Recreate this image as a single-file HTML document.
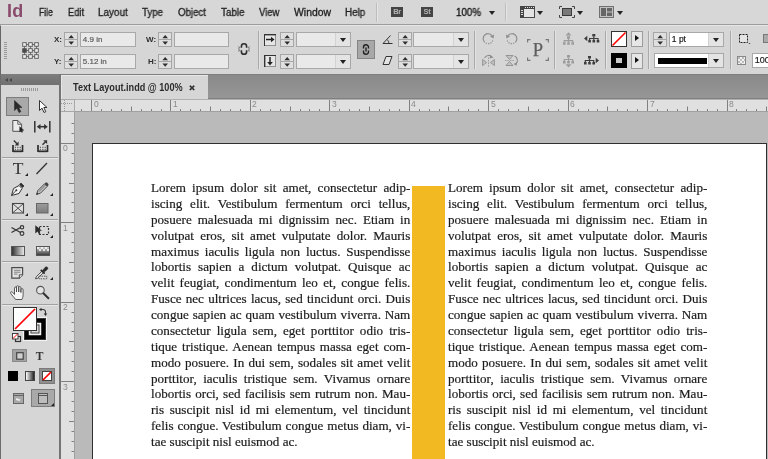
<!DOCTYPE html><html><head><meta charset="utf-8"><title>Text Layout.indd @ 100%</title><style>
*{margin:0;padding:0;box-sizing:border-box}
html,body{width:768px;height:459px;overflow:hidden;background:#d6d6d6;font-family:"Liberation Sans",sans-serif;}
.a{position:absolute}
#menubar{left:0;top:0;width:768px;height:25px;background:#d7d7d7;border-bottom:1px solid #9c9c9c}
.mi{position:absolute;top:5px;font-size:10px;line-height:15px;color:#222;-webkit-text-stroke-width:.3px;white-space:nowrap;transform-origin:0 50%}
#ctrl{left:0;top:25px;width:768px;height:49px;background:#d6d6d6;border-top:1px solid #e6e6e6;border-left:1px solid #666}
.fld{position:absolute;height:15px;background:#e9e9e9;border:1px solid #a8a8a8;font-size:8px;line-height:13.5px;color:#5c5c5c;-webkit-text-stroke-width:.2px;padding-left:1.800px;white-space:nowrap;overflow:hidden}
.sp{position:absolute;width:14px;height:15px;background:#dedede;border:1px solid #a8a8a8}
.sp:before{content:"";position:absolute;left:0;right:0;top:6.5px;height:1px;background:#a8a8a8}
.sp i{position:absolute;left:3.4px;width:0;height:0;border-left:2.8px solid transparent;border-right:2.8px solid transparent}
.sp i.u{top:2.3px;border-bottom:3.3px solid #333}
.sp i.d{top:8.8px;border-top:3.3px solid #333}
.lbl{position:absolute;font-size:8px;font-weight:bold;color:#2e2e2e;line-height:10px}
.vsep{position:absolute;width:1px;top:31px;height:38px;background:#a9a9a9;box-shadow:1px 0 0 #e4e4e4}
.dd{position:absolute;right:0;top:0;bottom:0;width:15px;border-left:1px solid #d2d2d2;background:#e4e4e4}
.dd:after{content:"";position:absolute;left:4px;top:4.5px;border-left:3px solid transparent;border-right:3px solid transparent;border-top:4px solid #222}
#tabbar{left:61px;top:74px;width:707px;height:25px;background:linear-gradient(#8a8a8a,#969696);border-top:1px solid #7e7e7e;border-bottom:1px solid #808080}
#tab{left:61px;top:75px;width:147px;height:24px;background:#d6d6d6;border-top:1px solid #e8e8e8;border-left:1px solid #e6e6e6;font-size:10px;font-weight:bold;color:#2b2b2b;line-height:24px;padding-left:11px;white-space:nowrap}
#hr{left:61px;top:99px;width:707px;height:13px;background:#e0e0e0;border-top:1px solid #b0b0b0;border-bottom:1px solid #a0a0a0;overflow:hidden}
#vr{left:61px;top:112px;width:14px;height:347px;background:#e0e0e0;border-right:1px solid #a0a0a0;overflow:hidden}
#org{left:61px;top:99px;width:14px;height:13px;background:#dedede;border:1px solid #a8a8a8;border-left:none}
.rn{position:absolute;font-size:8.5px;color:#8a8a8a;line-height:9px}
#paste{left:75px;top:112px;width:693px;height:347px;background:#bababa}
#page{left:92px;top:143px;width:675px;height:330px;background:#fff;border:1px solid #2f2f2f}
.col{position:absolute;width:259.3px;font-family:"Liberation Serif",serif;font-size:13.1px;line-height:15.875px;color:#1c1c1c;-webkit-text-stroke:.2px #1c1c1c;text-align:justify}
.col div{text-align:justify;text-align-last:justify;white-space:nowrap;height:15.875px}
.col div.last{text-align-last:left}
#bar{left:412px;top:186px;width:33px;height:280px;background:#f3b923}
#tools{left:0;top:74px;width:61px;height:385px;background:#d6d6d6;border-left:1px solid #6d6d6d;}
#thead{left:1px;top:74px;width:58px;height:11px;background:linear-gradient(#7e7e7e,#707070)}
#tedge{left:59px;top:74px;width:2px;height:385px;background:#747474}
.tsep{position:absolute;left:2px;width:56px;height:1px;background:#a2a2a2;box-shadow:0 1px 0 #e6e6e6}
.sel{position:absolute;background:#a9a9a9;border:1px solid #7c7c7c}
svg{position:absolute;overflow:visible}
.col,.mi,#tab,.fld,.lbl,.rn,.gt{will-change:transform}
</style></head><body>
<div id="menubar" class="a">
<div class="a gt" style="left:6.800px;top:1.300px;font-size:18px;line-height:20px;font-weight:bold;color:#8a4a6c;letter-spacing:0.300px;transform:scaleX(1);transform-origin:left">Id</div>
<div class="mi" style="left:39.3px;transform:scaleX(0.86)">File</div>
<div class="mi" style="left:68px;transform:scaleX(0.93)">Edit</div>
<div class="mi" style="left:98.3px;transform:scaleX(0.99)">Layout</div>
<div class="mi" style="left:142px;transform:scaleX(0.97)">Type</div>
<div class="mi" style="left:178px;transform:scaleX(0.97)">Object</div>
<div class="mi" style="left:221px;transform:scaleX(0.985)">Table</div>
<div class="mi" style="left:258.5px;transform:scaleX(0.945)">View</div>
<div class="mi" style="left:294px;transform:scaleX(1.04)">Window</div>
<div class="mi" style="left:344.5px;transform:scaleX(0.98)">Help</div>
<div class="a" style="left:376px;top:3px;width:1px;height:19px;background:#bdbdbd;box-shadow:1px 0 0 #e6e6e6"></div>
<div class="a gt" style="left:391px;top:7px;width:12px;height:10px;background:#454545;color:#b4b4b4;font-size:7.5px;font-weight:bold;line-height:10px;text-align:center;letter-spacing:-0.3px">Br</div>
<div class="a gt" style="left:421px;top:7px;width:12px;height:10px;background:#454545;color:#b4b4b4;font-size:7.5px;font-weight:bold;line-height:10px;text-align:center;letter-spacing:-0.3px">St</div>
<div class="mi" style="left:456px;color:#111;transform:scaleX(.977)">100%</div>
<div class="a" style="left:489px;top:11px;border-left:3px solid transparent;border-right:3px solid transparent;border-top:4px solid #222"></div>
<div class="a" style="left:505px;top:3px;width:1px;height:18px;background:#bdbdbd;box-shadow:1px 0 0 #e6e6e6"></div>
<svg style="left:520px;top:6px" width="15" height="12" viewBox="0 0 15 12"><rect x="0.5" y="0.5" width="14" height="11" fill="#e4e4e4" stroke="#4a4a4a"/><rect x="0" y="0" width="15" height="3" fill="#444"/><rect x="0" y="0" width="4" height="12" fill="#444"/><g fill="#ddd"><rect x="5" y="1" width="1" height="1"/><rect x="7" y="1" width="1" height="1"/><rect x="9" y="1" width="1" height="1"/><rect x="11" y="1" width="1" height="1"/><rect x="13" y="1" width="1" height="1"/><rect x="1" y="4" width="2" height="1"/><rect x="1" y="6" width="2" height="1"/><rect x="1" y="8" width="2" height="1"/></g></svg>
<div class="a" style="left:537px;top:11px;border-left:3px solid transparent;border-right:3px solid transparent;border-top:4px solid #222"></div>
<svg style="left:559px;top:6px" width="16" height="12" viewBox="0 0 16 12"><path d="M0.5 3V0.5H3M13 0.5h2.5V3M15.5 9v2.5H13M3 11.5H0.5V9" fill="none" stroke="#444"/><rect x="3.500" y="2.500" width="9" height="7" fill="#7a7a7a" stroke="#3a3a3a"/></svg>
<div class="a" style="left:577px;top:11px;border-left:3px solid transparent;border-right:3px solid transparent;border-top:4px solid #222"></div>
<svg style="left:599px;top:6px" width="15" height="12" viewBox="0 0 15 12"><rect x="0.500" y="0.500" width="14" height="11" fill="#c2c2c2" stroke="#707070"/><rect x="2" y="2" width="5" height="8" fill="#666"/><rect x="8" y="2" width="5" height="3.500" fill="#666"/><rect x="8" y="6.500" width="5" height="3.500" fill="#666"/></svg>
<div class="a" style="left:617px;top:11px;border-left:3px solid transparent;border-right:3px solid transparent;border-top:4px solid #222"></div>
</div>
<div id="ctrl" class="a"></div>
<div class="a" style="left:4px;top:42px;width:3px;height:17px;background:repeating-linear-gradient(#999 0 1px,transparent 1px 2px)"></div>
<svg style="left:22px;top:42px" width="17" height="17" viewBox="0 0 17 17"><path d="M2.500 2.500H14.500V14.500H2.500zM2.500 8.500H14.500M8.500 2.500V14.500" fill="none" stroke="#666" stroke-width=".9"/><rect x="0.7" y="0.7" width="3.600" height="3.600" fill="#f0f0f0" stroke="#555" stroke-width=".9"/><rect x="6.7" y="0.7" width="3.600" height="3.600" fill="#f0f0f0" stroke="#555" stroke-width=".9"/><rect x="12.7" y="0.7" width="3.600" height="3.600" fill="#f0f0f0" stroke="#555" stroke-width=".9"/><rect x="0.7" y="6.7" width="3.600" height="3.600" fill="#4a4a4a" stroke="#555" stroke-width=".9"/><rect x="6.7" y="6.7" width="3.600" height="3.600" fill="#f0f0f0" stroke="#555" stroke-width=".9"/><rect x="12.7" y="6.7" width="3.600" height="3.600" fill="#f0f0f0" stroke="#555" stroke-width=".9"/><rect x="0.7" y="12.7" width="3.600" height="3.600" fill="#f0f0f0" stroke="#555" stroke-width=".9"/><rect x="6.7" y="12.7" width="3.600" height="3.600" fill="#f0f0f0" stroke="#555" stroke-width=".9"/><rect x="12.7" y="12.7" width="3.600" height="3.600" fill="#f0f0f0" stroke="#555" stroke-width=".9"/></svg>
<div class="lbl" style="left:53.5px;top:35px">X:</div>
<div class="lbl" style="left:54px;top:56.5px">Y:</div>
<svg style="left:64px;top:31.5px" width="14" height="15" viewBox="0 0 14 15"><rect x="0.500" y="0.500" width="13" height="14" fill="#dfdfdf" stroke="#a6a6a6"/><path d="M1 7.500h12" stroke="#a6a6a6"/><path d="M4.400 6.200h5.600l-2.800-3.300zM4.400 9.400h5.600l-2.800 3.300z" fill="#2e2e2e"/></svg>
<svg style="left:64px;top:53.5px" width="14" height="15" viewBox="0 0 14 15"><rect x="0.500" y="0.500" width="13" height="14" fill="#dfdfdf" stroke="#a6a6a6"/><path d="M1 7.500h12" stroke="#a6a6a6"/><path d="M4.400 6.200h5.600l-2.800-3.300zM4.400 9.400h5.600l-2.800 3.300z" fill="#2e2e2e"/></svg>
<div class="fld" style="left:80px;top:31.5px;width:56px;">4.9 in</div>
<div class="fld" style="left:80px;top:53.5px;width:56px;">5.12 in</div>
<div class="lbl" style="left:146px;top:35px">W:</div>
<div class="lbl" style="left:148px;top:56.5px">H:</div>
<svg style="left:158px;top:31.5px" width="14" height="15" viewBox="0 0 14 15"><rect x="0.500" y="0.500" width="13" height="14" fill="#dfdfdf" stroke="#a6a6a6"/><path d="M1 7.500h12" stroke="#a6a6a6"/><path d="M4.400 6.200h5.600l-2.800-3.300zM4.400 9.400h5.600l-2.800 3.300z" fill="#2e2e2e"/></svg>
<svg style="left:158px;top:53.5px" width="14" height="15" viewBox="0 0 14 15"><rect x="0.500" y="0.500" width="13" height="14" fill="#dfdfdf" stroke="#a6a6a6"/><path d="M1 7.500h12" stroke="#a6a6a6"/><path d="M4.400 6.200h5.600l-2.800-3.300zM4.400 9.400h5.600l-2.800 3.300z" fill="#2e2e2e"/></svg>
<div class="fld" style="left:174px;top:31.5px;width:55px;"></div>
<div class="fld" style="left:174px;top:53.5px;width:55px;"></div>
<svg style="left:238px;top:42.500px" width="12" height="12" viewBox="0 0 12 12"><path d="M3.400 4.800V3.300a2.600 2.600 0 0 1 5.200 0V4.800M3.400 7.200v1.500a2.600 2.600 0 0 0 5.200 0V7.200" fill="none" stroke="#2e2e2e" stroke-width="1.600"/><path d="M0.200 3.800l1.900.8M0 6h1.900M0.200 8.200l1.900-.8M11.800 3.800l-1.900.8M12 6h-1.900M11.800 8.200l-1.900-.8" stroke="#555" stroke-width=".8"/></svg>
<div class="vsep" style="left:258px"></div>
<svg style="left:264px;top:34px" width="12" height="12" viewBox="0 0 12 12"><rect x="0.500" y="0.500" width="11" height="11" fill="#e6e6e6" stroke="#444" stroke-dasharray="1 1"/><path d="M0.500 0v12" stroke="#333" stroke-width="1"/><path d="M0 0.700h12" stroke="#333" stroke-width="1.400"/><path d="M2 5.500h6" stroke="#222" stroke-width="1.500"/><path d="M7 2.800l3.500 2.700-3.500 2.700z" fill="#222"/></svg>
<svg style="left:264px;top:55px" width="12" height="12" viewBox="0 0 12 12"><rect x="0.500" y="0.500" width="11" height="11" fill="#e6e6e6" stroke="#444" stroke-dasharray="1 1"/><path d="M0.700 0v12" stroke="#333" stroke-width="1.400"/><path d="M0 0.500h12" stroke="#333" stroke-width="1"/><path d="M6 2v6" stroke="#222" stroke-width="1.500"/><path d="M3.200 7l2.800 3.500 2.800-3.500z" fill="#222"/></svg>
<svg style="left:280px;top:31.5px" width="14" height="15" viewBox="0 0 14 15"><rect x="0.500" y="0.500" width="13" height="14" fill="#dfdfdf" stroke="#a6a6a6"/><path d="M1 7.500h12" stroke="#a6a6a6"/><path d="M4.400 6.200h5.600l-2.800-3.300zM4.400 9.400h5.600l-2.800 3.300z" fill="#2e2e2e"/></svg>
<svg style="left:280px;top:53.5px" width="14" height="15" viewBox="0 0 14 15"><rect x="0.500" y="0.500" width="13" height="14" fill="#dfdfdf" stroke="#a6a6a6"/><path d="M1 7.500h12" stroke="#a6a6a6"/><path d="M4.400 6.200h5.600l-2.800-3.300zM4.400 9.400h5.600l-2.800 3.300z" fill="#2e2e2e"/></svg>
<div class="fld" style="left:296px;top:31.5px;width:55px;"><span class="dd"></span></div>
<div class="fld" style="left:296px;top:53.5px;width:55px;"><span class="dd"></span></div>
<div class="sel" style="left:357px;top:40px;width:18px;height:19px;background:#a8a8a8;border-color:#858585"></div>
<svg style="left:362px;top:44px" width="8" height="11" viewBox="0 0 8 11"><path d="M1.5 4.5V3.2a2.5 2.5 0 0 1 5 0V4.5M1.5 6.5v1.3a2.5 2.5 0 0 0 5 0V6.5M4 3.5v4" fill="none" stroke="#222" stroke-width="1.4"/></svg>
<svg style="left:382px;top:35px" width="11" height="9" viewBox="0 0 11 9"><path d="M8.5 0.5L1 8.5H10.5" fill="none" stroke="#333" stroke-width="1"/><path d="M5 4.5a4 4 0 0 1 1.8 4" fill="none" stroke="#333" stroke-width=".9"/></svg>
<svg style="left:382px;top:56px" width="11" height="9" viewBox="0 0 11 9"><path d="M4 0.5H10L7 8.5H1z" fill="#e4e4e4" stroke="#333" stroke-width="1"/></svg>
<svg style="left:397.5px;top:31.5px" width="14" height="15" viewBox="0 0 14 15"><rect x="0.500" y="0.500" width="13" height="14" fill="#dfdfdf" stroke="#a6a6a6"/><path d="M1 7.500h12" stroke="#a6a6a6"/><path d="M4.400 6.200h5.600l-2.800-3.300zM4.400 9.400h5.600l-2.800 3.300z" fill="#2e2e2e"/></svg>
<svg style="left:397.5px;top:53.5px" width="14" height="15" viewBox="0 0 14 15"><rect x="0.500" y="0.500" width="13" height="14" fill="#dfdfdf" stroke="#a6a6a6"/><path d="M1 7.500h12" stroke="#a6a6a6"/><path d="M4.400 6.200h5.600l-2.800-3.300zM4.400 9.400h5.600l-2.800 3.300z" fill="#2e2e2e"/></svg>
<div class="fld" style="left:413px;top:31.5px;width:56px;"><span class="dd"></span></div>
<div class="fld" style="left:413px;top:53.5px;width:56px;"><span class="dd"></span></div>
<div class="vsep" style="left:474px"></div>
<svg style="left:482px;top:32px" width="13" height="13" viewBox="0 0 13 13"><path d="M2.45 9.95A4.9 4.9 0 1 1 9.84 3.52" fill="none" stroke="#8e8e8e" stroke-width="1.200"/><path d="M10.80 8.48A4.9 4.9 0 0 1 2.45 9.95" fill="none" stroke="#8e8e8e" stroke-width="1.200" stroke-dasharray="1.200 1.200"/><path d="M11.50 6.58L12.15 2.52L7.98 4.47z" fill="#8e8e8e"/></svg>
<svg style="left:505px;top:32px" width="13" height="13" viewBox="0 0 13 13"><g transform="translate(13,0) scale(-1,1)"><path d="M2.45 9.95A4.9 4.9 0 1 1 9.84 3.52" fill="none" stroke="#8e8e8e" stroke-width="1.200"/><path d="M10.80 8.48A4.9 4.9 0 0 1 2.45 9.95" fill="none" stroke="#8e8e8e" stroke-width="1.200" stroke-dasharray="1.200 1.200"/><path d="M11.50 6.58L12.15 2.52L7.98 4.47z" fill="#8e8e8e"/></g></svg>
<svg style="left:482px;top:54px" width="13" height="13" viewBox="0 0 13 13"><path d="M0.600 5.500v6l4-3zM12.400 5.500v6l-4-3z" fill="#c4c4c4" stroke="#8e8e8e" stroke-width=".9"/><path d="M6.500 3.500v9.500" stroke="#8e8e8e" stroke-width=".8" stroke-dasharray="1.500 1"/><path d="M2.500 4a4.500 4.500 0 0 1 7.500-1" fill="none" stroke="#8e8e8e" stroke-width="1.100"/><path d="M8.200 1l3.300 2.600-3.800.9z" fill="#8e8e8e"/></svg>
<svg style="left:505px;top:54px" width="14" height="13" viewBox="0 0 14 13"><path d="M1 1.500h7l-3.500 4zM1 11.500h7l-3.500-4z" fill="#c4c4c4" stroke="#8e8e8e" stroke-width=".9"/><path d="M0 6.500h9.500" stroke="#8e8e8e" stroke-width=".8" stroke-dasharray="1.500 1"/><path d="M9.500 2a5 5 0 0 1 1.500 8" fill="none" stroke="#8e8e8e" stroke-width="1.100"/><path d="M12.300 8l-.8 3.800-3-1.800z" fill="#8e8e8e"/></svg>
<svg class="gt" style="left:527px;top:39px" width="22" height="22" viewBox="0 0 22 22"><path d="M0.600 3.500V0.600H3.500M18.500 0.600H21.400V3.500M21.400 18.500V21.400H18.500M3.500 21.400H0.600V18.500" fill="none" stroke="#7a7a7a" stroke-width="1.200"/><text x="11" y="16.500" font-family="Liberation Serif,serif" font-size="18.500" fill="#5e5e5e" stroke="#5e5e5e" stroke-width=".25" text-anchor="middle">P</text></svg>
<div class="vsep" style="left:554px"></div>
<svg style="left:563px;top:32px" width="11" height="13" viewBox="0 0 11 13"><path d="M5.500 0.200l3 3.200h-6z" fill="#9c9c9c"/><g transform="translate(0,4.200)"><path d="M4 0h3v2.500H4zM0 6h2.600v2.500H0zM4.200 6h2.600v2.500H4.200zM8.400 6h2.600v2.500H8.400z" fill="#9c9c9c"/><path d="M5.500 2.500v3.500M1.300 6V4.500h8.400V6" fill="none" stroke="#9c9c9c" stroke-width="1.200"/></g></svg>
<svg style="left:563px;top:55.300px" width="11" height="13" viewBox="0 0 11 13"><g><path d="M4 0h3v2.500H4zM0 6h2.600v2.500H0zM4.200 6h2.600v2.500H4.200zM8.400 6h2.600v2.500H8.400z" fill="#9c9c9c"/><path d="M5.500 2.500v3.500M1.300 6V4.500h8.400V6" fill="none" stroke="#9c9c9c" stroke-width="1.200"/></g><path d="M5.500 12.400l3-3.200h-6z" fill="#9c9c9c"/></svg>
<svg style="left:583.800px;top:34px" width="16" height="9" viewBox="0 0 16 9"><path d="M0 4.500l3.300-2.800v5.600z" fill="#3c3c3c"/><g transform="translate(4.300,0)"><path d="M4 0h3v2.500H4zM0 6h2.600v2.500H0zM4.200 6h2.600v2.500H4.200zM8.400 6h2.600v2.500H8.400z" fill="#3c3c3c"/><path d="M5.500 2.500v3.500M1.300 6V4.500h8.400V6" fill="none" stroke="#3c3c3c" stroke-width="1.200"/></g></svg>
<svg style="left:584px;top:56px" width="16" height="9" viewBox="0 0 16 9"><g><path d="M4 0h3v2.500H4zM0 6h2.600v2.500H0zM4.200 6h2.600v2.500H4.200zM8.400 6h2.600v2.500H8.400z" fill="#3c3c3c"/><path d="M5.500 2.500v3.500M1.300 6V4.500h8.400V6" fill="none" stroke="#3c3c3c" stroke-width="1.200"/></g><path d="M15 4.500l-3.300-2.800v5.600z" fill="#3c3c3c"/></svg>
<div class="vsep" style="left:605px"></div>
<svg style="left:611px;top:31px" width="16" height="16" viewBox="0 0 16 16"><rect x="0.500" y="0.500" width="15" height="15" fill="#fff" stroke="#333"/><path d="M1.500 14.500L14.500 1.500" stroke="#f00" stroke-width="1.600"/></svg>
<svg style="left:611px;top:53px" width="16" height="15" viewBox="0 0 16 15"><rect x="0" y="0" width="16" height="15" fill="#000"/><rect x="5" y="5" width="6" height="5" fill="#c8c8c8"/></svg>
<div class="a" style="left:631px;top:31px;width:12px;height:16px;background:#e6e6e6;border:1px solid #9c9c9c"></div>
<div class="a" style="left:635px;top:35px;border-top:3.500px solid transparent;border-bottom:3.500px solid transparent;border-left:4px solid #111"></div>
<div class="a" style="left:631px;top:53px;width:12px;height:16px;background:#e6e6e6;border:1px solid #9c9c9c"></div>
<div class="a" style="left:635px;top:57px;border-top:3.500px solid transparent;border-bottom:3.500px solid transparent;border-left:4px solid #111"></div>
<div class="vsep" style="left:648px"></div>
<svg style="left:653px;top:31.5px" width="14" height="15" viewBox="0 0 14 15"><rect x="0.500" y="0.500" width="13" height="14" fill="#dfdfdf" stroke="#a6a6a6"/><path d="M1 7.500h12" stroke="#a6a6a6"/><path d="M4.400 6.200h5.600l-2.800-3.300zM4.400 9.400h5.600l-2.800 3.300z" fill="#2e2e2e"/></svg>
<div class="fld" style="left:669px;top:31.5px;width:54.5px;background:#fff;color:#1a1a1a;font-size:8.500px">1 pt<span class="dd"></span></div>
<div class="fld" style="left:654px;top:53px;width:70px;background:#fff"><span class="a" style="left:3px;top:4px;width:49px;height:6px;background:#000"></span><span class="dd"></span></div>
<div class="vsep" style="left:730px"></div>
<svg style="left:739px;top:34px" width="12" height="10" viewBox="0 0 12 10"><rect x="0.500" y="0.500" width="8" height="8" fill="#e4e4e4" stroke="#222" stroke-dasharray="2 1"/><path d="M9.500 9h2l-1 1z" fill="#222"/></svg>
<svg style="left:763px;top:34px" width="8" height="9" viewBox="0 0 8 9"><rect x="0.500" y="0.500" width="8" height="8" fill="#aaa" stroke="#777"/></svg>
<svg style="left:737px;top:56px" width="9" height="9" viewBox="0 0 9 9"><rect x="0.500" y="0.500" width="8" height="8" fill="#f2f2f2" stroke="#888"/><path d="M1 1h2v2H1zM5 1h2v2H5zM3 3h2v2H3zM1 5h2v2H1zM5 5h2v2H5zM7 3h1v2H7zM3 7h2v1H3z" fill="#bbb"/></svg>
<div class="fld" style="background:#fff;color:#1a1a1a;font-size:9px;left:752px;top:53px;width:30px;">100</div>
<div id="tabbar" class="a"></div>
<div id="tab" class="a"><span style="display:inline-block;transform:scaleX(.912);transform-origin:0 50%">Text Layout.indd @ 100%</span><span class="a" style="left:127.300px;top:0;font-size:9.500px;-webkit-text-stroke:.5px #2b2b2b">&#215;</span></div>
<div id="paste" class="a"></div>
<div id="page" class="a"></div>
<div id="bar" class="a"></div>
<div class="col" style="left:150.5px;top:180px">
<div>Lorem ipsum dolor sit amet, consectetur adip-</div>
<div>iscing elit. Vestibulum fermentum orci tellus,</div>
<div>posuere malesuada mi dignissim nec. Etiam in</div>
<div>volutpat eros, sit amet vulputate dolor. Mauris</div>
<div>maximus iaculis ligula non luctus. Suspendisse</div>
<div>lobortis sapien a dictum volutpat. Quisque ac</div>
<div>velit feugiat, condimentum leo et, congue felis.</div>
<div>Fusce nec ultrices lacus, sed tincidunt orci. Duis</div>
<div>congue sapien ac quam vestibulum viverra. Nam</div>
<div>consectetur ligula sem, eget porttitor odio tris-</div>
<div>tique tristique. Aenean tempus massa eget com-</div>
<div>modo posuere. In dui sem, sodales sit amet velit</div>
<div>porttitor, iaculis tristique sem. Vivamus ornare</div>
<div>lobortis orci, sed facilisis sem rutrum non. Mau-</div>
<div>ris suscipit nisl id mi elementum, vel tincidunt</div>
<div>felis congue. Vestibulum congue metus diam, vi-</div>
<div class="last">tae suscipit nisl euismod ac.</div>
</div>
<div class="col" style="left:448.2px;top:180px">
<div>Lorem ipsum dolor sit amet, consectetur adip-</div>
<div>iscing elit. Vestibulum fermentum orci tellus,</div>
<div>posuere malesuada mi dignissim nec. Etiam in</div>
<div>volutpat eros, sit amet vulputate dolor. Mauris</div>
<div>maximus iaculis ligula non luctus. Suspendisse</div>
<div>lobortis sapien a dictum volutpat. Quisque ac</div>
<div>velit feugiat, condimentum leo et, congue felis.</div>
<div>Fusce nec ultrices lacus, sed tincidunt orci. Duis</div>
<div>congue sapien ac quam vestibulum viverra. Nam</div>
<div>consectetur ligula sem, eget porttitor odio tris-</div>
<div>tique tristique. Aenean tempus massa eget com-</div>
<div>modo posuere. In dui sem, sodales sit amet velit</div>
<div>porttitor, iaculis tristique sem. Vivamus ornare</div>
<div>lobortis orci, sed facilisis sem rutrum non. Mau-</div>
<div>ris suscipit nisl id mi elementum, vel tincidunt</div>
<div>felis congue. Vestibulum congue metus diam, vi-</div>
<div class="last">tae suscipit nisl euismod ac.</div>
</div>
<div id="hr" class="a">
<svg style="left:0;top:0" width="707" height="12" viewBox="61 99.500 707 12"><path d="M81.5 111.500v-3" stroke="#808080" stroke-width="1"/><path d="M91.5 111.500v-12" stroke="#808080" stroke-width="1"/><path d="M101.5 111.500v-3" stroke="#808080" stroke-width="1"/><path d="M111.5 111.500v-3" stroke="#808080" stroke-width="1"/><path d="M121.5 111.500v-3" stroke="#808080" stroke-width="1"/><path d="M131.5 111.500v-5.5" stroke="#808080" stroke-width="1"/><path d="M141.5 111.500v-3" stroke="#808080" stroke-width="1"/><path d="M151.5 111.500v-3" stroke="#808080" stroke-width="1"/><path d="M161.5 111.500v-3" stroke="#808080" stroke-width="1"/><path d="M170.5 111.500v-12" stroke="#808080" stroke-width="1"/><path d="M180.5 111.500v-3" stroke="#808080" stroke-width="1"/><path d="M190.5 111.500v-3" stroke="#808080" stroke-width="1"/><path d="M200.5 111.500v-3" stroke="#808080" stroke-width="1"/><path d="M210.5 111.500v-5.5" stroke="#808080" stroke-width="1"/><path d="M220.5 111.500v-3" stroke="#808080" stroke-width="1"/><path d="M230.5 111.500v-3" stroke="#808080" stroke-width="1"/><path d="M240.5 111.500v-3" stroke="#808080" stroke-width="1"/><path d="M250.5 111.500v-12" stroke="#808080" stroke-width="1"/><path d="M260.5 111.500v-3" stroke="#808080" stroke-width="1"/><path d="M270.5 111.500v-3" stroke="#808080" stroke-width="1"/><path d="M280.5 111.500v-3" stroke="#808080" stroke-width="1"/><path d="M290.5 111.500v-5.5" stroke="#808080" stroke-width="1"/><path d="M300.5 111.500v-3" stroke="#808080" stroke-width="1"/><path d="M309.5 111.500v-3" stroke="#808080" stroke-width="1"/><path d="M319.5 111.500v-3" stroke="#808080" stroke-width="1"/><path d="M329.5 111.500v-12" stroke="#808080" stroke-width="1"/><path d="M339.5 111.500v-3" stroke="#808080" stroke-width="1"/><path d="M349.5 111.500v-3" stroke="#808080" stroke-width="1"/><path d="M359.5 111.500v-3" stroke="#808080" stroke-width="1"/><path d="M369.5 111.500v-5.5" stroke="#808080" stroke-width="1"/><path d="M379.5 111.500v-3" stroke="#808080" stroke-width="1"/><path d="M389.5 111.500v-3" stroke="#808080" stroke-width="1"/><path d="M399.5 111.500v-3" stroke="#808080" stroke-width="1"/><path d="M409.5 111.500v-12" stroke="#808080" stroke-width="1"/><path d="M419.5 111.500v-3" stroke="#808080" stroke-width="1"/><path d="M429.5 111.500v-3" stroke="#808080" stroke-width="1"/><path d="M439.5 111.500v-3" stroke="#808080" stroke-width="1"/><path d="M448.5 111.500v-5.5" stroke="#808080" stroke-width="1"/><path d="M458.5 111.500v-3" stroke="#808080" stroke-width="1"/><path d="M468.5 111.500v-3" stroke="#808080" stroke-width="1"/><path d="M478.5 111.500v-3" stroke="#808080" stroke-width="1"/><path d="M488.5 111.500v-12" stroke="#808080" stroke-width="1"/><path d="M498.5 111.500v-3" stroke="#808080" stroke-width="1"/><path d="M508.5 111.500v-3" stroke="#808080" stroke-width="1"/><path d="M518.5 111.500v-3" stroke="#808080" stroke-width="1"/><path d="M528.5 111.500v-5.5" stroke="#808080" stroke-width="1"/><path d="M538.5 111.500v-3" stroke="#808080" stroke-width="1"/><path d="M548.5 111.500v-3" stroke="#808080" stroke-width="1"/><path d="M558.5 111.500v-3" stroke="#808080" stroke-width="1"/><path d="M568.5 111.500v-12" stroke="#808080" stroke-width="1"/><path d="M578.5 111.500v-3" stroke="#808080" stroke-width="1"/><path d="M588.5 111.500v-3" stroke="#808080" stroke-width="1"/><path d="M597.5 111.500v-3" stroke="#808080" stroke-width="1"/><path d="M607.5 111.500v-5.5" stroke="#808080" stroke-width="1"/><path d="M617.5 111.500v-3" stroke="#808080" stroke-width="1"/><path d="M627.5 111.500v-3" stroke="#808080" stroke-width="1"/><path d="M637.5 111.500v-3" stroke="#808080" stroke-width="1"/><path d="M647.5 111.500v-12" stroke="#808080" stroke-width="1"/><path d="M657.5 111.500v-3" stroke="#808080" stroke-width="1"/><path d="M667.5 111.500v-3" stroke="#808080" stroke-width="1"/><path d="M677.5 111.500v-3" stroke="#808080" stroke-width="1"/><path d="M687.5 111.500v-5.5" stroke="#808080" stroke-width="1"/><path d="M697.5 111.500v-3" stroke="#808080" stroke-width="1"/><path d="M707.5 111.500v-3" stroke="#808080" stroke-width="1"/><path d="M717.5 111.500v-3" stroke="#808080" stroke-width="1"/><path d="M727.5 111.500v-12" stroke="#808080" stroke-width="1"/><path d="M736.5 111.500v-3" stroke="#808080" stroke-width="1"/><path d="M746.5 111.500v-3" stroke="#808080" stroke-width="1"/><path d="M756.5 111.500v-3" stroke="#808080" stroke-width="1"/><path d="M766.5 111.500v-5.5" stroke="#808080" stroke-width="1"/></svg>
<div class="rn" style="left:32.5px;top:-0.500px">0</div>
<div class="rn" style="left:111.9px;top:-0.500px">1</div>
<div class="rn" style="left:191.4px;top:-0.500px">2</div>
<div class="rn" style="left:270.8px;top:-0.500px">3</div>
<div class="rn" style="left:350.3px;top:-0.500px">4</div>
<div class="rn" style="left:429.7px;top:-0.500px">5</div>
<div class="rn" style="left:509.1px;top:-0.500px">6</div>
<div class="rn" style="left:588.6px;top:-0.500px">7</div>
<div class="rn" style="left:668.0px;top:-0.500px">8</div>
</div>
<div id="vr" class="a">
<svg style="left:0;top:0" width="14" height="347" viewBox="61 112 14 347"><path d="M74.500 123.5h-3" stroke="#808080" stroke-width="1"/><path d="M74.500 133.5h-3" stroke="#808080" stroke-width="1"/><path d="M74.500 143.5h-14" stroke="#808080" stroke-width="1"/><path d="M74.500 153.5h-3" stroke="#808080" stroke-width="1"/><path d="M74.500 163.5h-3" stroke="#808080" stroke-width="1"/><path d="M74.500 173.5h-3" stroke="#808080" stroke-width="1"/><path d="M74.500 183.5h-5.5" stroke="#808080" stroke-width="1"/><path d="M74.500 192.5h-3" stroke="#808080" stroke-width="1"/><path d="M74.500 202.5h-3" stroke="#808080" stroke-width="1"/><path d="M74.500 212.5h-3" stroke="#808080" stroke-width="1"/><path d="M74.500 222.5h-14" stroke="#808080" stroke-width="1"/><path d="M74.500 232.5h-3" stroke="#808080" stroke-width="1"/><path d="M74.500 242.5h-3" stroke="#808080" stroke-width="1"/><path d="M74.500 252.5h-3" stroke="#808080" stroke-width="1"/><path d="M74.500 262.5h-5.5" stroke="#808080" stroke-width="1"/><path d="M74.500 272.5h-3" stroke="#808080" stroke-width="1"/><path d="M74.500 282.5h-3" stroke="#808080" stroke-width="1"/><path d="M74.500 292.5h-3" stroke="#808080" stroke-width="1"/><path d="M74.500 302.5h-14" stroke="#808080" stroke-width="1"/><path d="M74.500 312.5h-3" stroke="#808080" stroke-width="1"/><path d="M74.500 322.5h-3" stroke="#808080" stroke-width="1"/><path d="M74.500 331.5h-3" stroke="#808080" stroke-width="1"/><path d="M74.500 341.5h-5.5" stroke="#808080" stroke-width="1"/><path d="M74.500 351.5h-3" stroke="#808080" stroke-width="1"/><path d="M74.500 361.5h-3" stroke="#808080" stroke-width="1"/><path d="M74.500 371.5h-3" stroke="#808080" stroke-width="1"/><path d="M74.500 381.5h-14" stroke="#808080" stroke-width="1"/><path d="M74.500 391.5h-3" stroke="#808080" stroke-width="1"/><path d="M74.500 401.5h-3" stroke="#808080" stroke-width="1"/><path d="M74.500 411.5h-3" stroke="#808080" stroke-width="1"/><path d="M74.500 421.5h-5.5" stroke="#808080" stroke-width="1"/><path d="M74.500 431.5h-3" stroke="#808080" stroke-width="1"/><path d="M74.500 441.5h-3" stroke="#808080" stroke-width="1"/><path d="M74.500 451.5h-3" stroke="#808080" stroke-width="1"/></svg>
<div class="rn" style="left:2px;top:32.3px">0</div>
<div class="rn" style="left:2px;top:111.7px">1</div>
<div class="rn" style="left:2px;top:191.2px">2</div>
<div class="rn" style="left:2px;top:270.6px">3</div>
</div>
<div id="org" class="a"><svg style="left:0;top:0" width="12" height="12" viewBox="0 0 12 12"><path d="M3.500 0v12M0 3.500h12" stroke="#999" stroke-width="1" stroke-dasharray="1 1"/></svg></div>
<div id="tools" class="a"></div><div id="thead" class="a"></div><div id="tedge" class="a"></div>
<svg style="left:5px;top:78px" width="7" height="4" viewBox="0 0 7 4"><path d="M3 0L0 2l3 2zM7 0L4 2l3 2z" fill="#4a4a4a"/></svg>
<div class="a" style="left:21px;top:88px;width:17px;height:3px;background:repeating-linear-gradient(90deg,#999 0 1px,transparent 1px 2px)"></div>
<div class="sel" style="left:6px;top:97px;width:23px;height:19px"></div>
<svg style="left:14px;top:100px" width="9" height="13" viewBox="0 0 9 13"><path d="M0.500 0.500V10.500L3 8.200 5 12.500 6.800 11.700 4.800 7.500H8z" fill="#2a2a2a" stroke="#2a2a2a" stroke-width=".6" stroke-linejoin="round"/></svg>
<svg style="left:39px;top:100px" width="9" height="13" viewBox="0 0 9 13"><path d="M0.500 0.500V10.500L3 8.200 5 12.500 6.800 11.700 4.800 7.500H8z" fill="#fff" stroke="#333" stroke-width="1" stroke-linejoin="round"/></svg>
<svg style="left:12px;top:120px" width="12" height="12" viewBox="0 0 12 12"><path d="M0.800 0.500H5.800L9.600 4.300V11.300H0.800z" fill="#ececec" stroke="#505050" stroke-width="1"/><path d="M5.800 0.500V4.300H9.600" fill="none" stroke="#505050" stroke-width=".9"/><path d="M7.600 6.600v5.400l1.400-1.100 0.800 1.500 1-.5-.8-1.500 1.900-.2z" fill="#222" stroke="#222" stroke-width=".3"/></svg>
<svg style="left:34px;top:121px" width="17" height="12" viewBox="0 0 17 12"><path d="M0.800 0v11.500M15.800 0v11.500" stroke="#333" stroke-width="1.500"/><path d="M5 5.700h7" stroke="#333" stroke-width="1.500"/><path d="M2.800 5.700l3.700-2.800v5.600zM13.800 5.700l-3.700-2.800v5.600z" fill="#333"/></svg>
<svg style="left:12px;top:140px" width="12" height="13" viewBox="0 0 12 13"><path d="M1 5V11.200H10.500V5" fill="none" stroke="#2e2e2e" stroke-width="1.700"/><path d="M1 11.500H10.500" stroke="#2e2e2e" stroke-width="1.400"/><path d="M2.300 6.500h7v3.800h-7z" fill="#e4e4e4"/><path d="M2.800 7.300h6.500M2.800 9.300h6.500" stroke="#444" stroke-width="1" stroke-dasharray="1.300 1.100"/><path d="M1.800 0.500l3.200 3.200" stroke="#333" stroke-width="1.400"/><path d="M6.600 1.600v3.800H2.800z" fill="#333"/></svg>
<svg style="left:36.500px;top:140px" width="12" height="13" viewBox="0 0 12 13"><path d="M1 5V11.200H10.500V5" fill="none" stroke="#2e2e2e" stroke-width="1.700"/><path d="M1 11.500H10.500" stroke="#2e2e2e" stroke-width="1.400"/><path d="M2.300 6.500h7v3.800h-7z" fill="#e4e4e4"/><path d="M2.800 7.300h6.500M2.800 9.300h6.500" stroke="#444" stroke-width="1" stroke-dasharray="1.300 1.100"/><path d="M5.500 4.800l3.200-3.200" stroke="#333" stroke-width="1.400"/><path d="M6.300 0.200h3.800v3.800z" fill="#333"/></svg>
<div class="tsep" style="top:157px"></div>
<div class="a gt" style="left:11px;top:160px;width:14px;font-family:'Liberation Serif',serif;font-size:17.500px;line-height:16px;color:#333;text-align:center">T</div>
<div class="a" style="left:25px;top:173px;width:0;height:0;border-left:3px solid transparent;border-bottom:3px solid #222"></div>
<svg style="left:36px;top:162px" width="12" height="13" viewBox="0 0 12 13"><path d="M0.500 12L11 1" stroke="#333" stroke-width="1.300"/></svg>
<svg style="left:11px;top:182px" width="14" height="14" viewBox="0 0 14 14"><path d="M0.500 13.500L2.500 6.500 8 3.500 11 6.500 8 11.500z" fill="#f2f2f2" stroke="#333" stroke-width="1"/><path d="M0.800 13.200L5 8.500" stroke="#333" stroke-width=".9"/><circle cx="5.300" cy="8.200" r="1" fill="#333"/><path d="M8.500 2.500L10 1l3 3-1.500 1.500z" fill="#333" stroke="#333" stroke-width=".8"/></svg>
<div class="a" style="left:25px;top:193px;width:0;height:0;border-left:3px solid transparent;border-bottom:3px solid #222"></div>
<svg style="left:36px;top:182px" width="13" height="13" viewBox="0 0 13 13"><path d="M0.500 12.500L1.800 8.500 8.500 1.800 11.200 4.500 4.500 11.200z" fill="#bdbdbd" stroke="#444" stroke-width=".9"/><path d="M8.500 1.800l1-1a1.200 1.200 0 0 1 1.700 0l1 1a1.200 1.200 0 0 1 0 1.700l-1 1z" fill="#444"/><path d="M0.500 12.500l.5-2 1.500 1.500z" fill="#222"/><path d="M3 9.500L9.500 3" stroke="#666" stroke-width=".8"/></svg>
<div class="a" style="left:50px;top:193px;width:0;height:0;border-left:3px solid transparent;border-bottom:3px solid #222"></div>
<svg style="left:12px;top:203px" width="12" height="11" viewBox="0 0 12 11"><rect x="0.500" y="0.500" width="11" height="9.500" fill="#e0e0e0" stroke="#4a4a4a" stroke-width="1.100"/><path d="M0.500 0.500L11.500 10M11.500 0.500L0.500 10" stroke="#444" stroke-width=".9"/></svg>
<div class="a" style="left:25px;top:213px;width:0;height:0;border-left:3px solid transparent;border-bottom:3px solid #222"></div>
<svg style="left:36px;top:203px" width="13" height="11" viewBox="0 0 13 11"><defs><linearGradient id="rg" x1="0" y1="0" x2="0" y2="1"><stop offset="0" stop-color="#9d9d9d"/><stop offset="1" stop-color="#7c7c7c"/></linearGradient></defs><rect x="0.500" y="0.500" width="11.500" height="9.500" fill="url(#rg)" stroke="#666" stroke-width="1"/></svg>
<div class="a" style="left:50px;top:213px;width:0;height:0;border-left:3px solid transparent;border-bottom:3px solid #222"></div>
<div class="tsep" style="top:219px"></div>
<svg style="left:11px;top:225px" width="14" height="12" viewBox="0 0 14 12"><path d="M0.500 2.500L9.500 7.500M0.500 7.500L9.500 2.500" stroke="#333" stroke-width="1.300"/><circle cx="11" cy="2.300" r="1.700" fill="none" stroke="#333" stroke-width="1.100"/><circle cx="11" cy="8.500" r="1.900" fill="none" stroke="#333" stroke-width="1.100"/></svg>
<svg style="left:35px;top:225px" width="16" height="12" viewBox="0 0 16 12"><rect x="4.500" y="1.500" width="9" height="8" fill="none" stroke="#333" stroke-width="1.200" stroke-dasharray="2 1.500"/><path d="M0.300 0.200V8.500l2.200-2 1.500 2.700 1.400-.8-1.500-2.600H7z" fill="#2a2a2a"/></svg>
<div class="a" style="left:50px;top:235px;width:0;height:0;border-left:3px solid transparent;border-bottom:3px solid #222"></div>
<svg style="left:11px;top:245.500px" width="14" height="10" viewBox="0 0 14 10"><defs><linearGradient id="gs"><stop offset="0" stop-color="#2a2a2a"/><stop offset="1" stop-color="#f0f0f0"/></linearGradient></defs><rect x="0.500" y="0.500" width="13" height="9" fill="url(#gs)" stroke="#555"/></svg>
<svg style="left:35.500px;top:245.500px" width="14" height="10" viewBox="0 0 14 10"><defs><linearGradient id="gf" x1="0" y1="0" x2="0" y2="1"><stop offset="0" stop-color="#ddd"/><stop offset="1" stop-color="#333"/></linearGradient></defs><rect x="0.500" y="0.500" width="13" height="9" fill="url(#gf)" stroke="#555"/><path d="M1 1h2v2H1zM5 1h2v2H5zM9 1h2v2H9zM3 3h2v2H3zM7 3h2v2H7zM11 3h2v2h-2z" fill="#fff" opacity=".75"/></svg>
<div class="tsep" style="top:261px"></div>
<svg style="left:11px;top:267px" width="13" height="12" viewBox="0 0 13 12"><path d="M0.800 0.700H11.600V7.800L8.300 11.200H0.800z" fill="#e2e2e2" stroke="#4a4a4a" stroke-width="1.200"/><path d="M11.600 7.800H8.300V11.200" fill="#f2f2f2" stroke="#4a4a4a" stroke-width="1"/><path d="M3 3.300h6.500M3 5.200h6.500M3 7.100h3.500" stroke="#777" stroke-width=".9"/></svg>
<svg style="left:35px;top:265.500px" width="13" height="14" viewBox="0 0 13 14"><path d="M0.500 12.800L1.200 10.800 6.800 5.200 8.300 6.700 2.700 12.300z" fill="#e0e0e0" stroke="#444" stroke-width=".9"/><path d="M5.800 3.800l3.900 3.900" stroke="#2a2a2a" stroke-width="1.700"/><path d="M7.600 4.400l2.600-3.200a1.500 1.500 0 0 1 2.200 2.200l-3.200 2.600z" fill="#2a2a2a" stroke="#2a2a2a" stroke-width=".5"/><path d="M4 10.200h7.800v2.600H4z" fill="#dcdcdc" stroke="#4a4a4a" stroke-width=".9" stroke-dasharray="1.600 .9"/></svg>
<div class="a" style="left:50px;top:277px;width:0;height:0;border-left:3px solid transparent;border-bottom:3px solid #222"></div>
<svg style="left:9.500px;top:284.500px" width="15" height="15" viewBox="0 0 15 15"><path d="M5.500 14.500C4.500 12.500 2 10.500 0.700 8.300 0 7 1.500 6.200 2.500 7.200L4.500 9.500V3C4.500 1.600 6.500 1.600 6.500 3V7 1.800C6.500 0.400 8.700 0.400 8.700 1.800V7 2.600C8.700 1.200 10.900 1.200 10.900 2.600V7.500 4.600C10.900 3.200 13.100 3.200 13.100 4.600V9.500C13.100 12 12.500 13 12 14.500z" fill="#f6f6f6" stroke="#4a4a4a" stroke-width=".9" stroke-linejoin="round"/></svg>
<svg style="left:36px;top:286px" width="14" height="14" viewBox="0 0 14 14"><circle cx="4.400" cy="4.200" r="3.800" fill="#e4e4e4" stroke="#555" stroke-width="1.100"/><path d="M7.400 7.200l5 5" stroke="#333" stroke-width="2" stroke-linecap="round"/></svg>
<div class="tsep" style="top:304px"></div>
<svg style="left:23px;top:317px" width="24" height="24" viewBox="0 0 24 24"><rect x="0.500" y="0.500" width="23" height="23" fill="#000" stroke="#f4f4f4"/><rect x="1.500" y="1.500" width="21" height="21" fill="#000" stroke="#333"/><rect x="6.500" y="6.500" width="11" height="11" fill="#d6d6d6" stroke="#f4f4f4" stroke-width="1.500"/><rect x="8" y="8" width="8" height="8" fill="#d6d6d6" stroke="#333" stroke-width=".8"/></svg>
<svg style="left:13px;top:307px" width="24" height="24" viewBox="0 0 24 24"><rect x="0.500" y="0.500" width="23" height="23" fill="#fff" stroke="#333" stroke-width="1"/><path d="M2 22L22 2" stroke="#f00" stroke-width="1.700"/></svg>
<svg style="left:39px;top:308px" width="8" height="8" viewBox="0 0 8 8"><path d="M1.500 1.500h2.500a2.500 2.500 0 0 1 2.500 2.500v2.500" fill="none" stroke="#333" stroke-width="1.100"/><path d="M0 1.500l2.500-1.800v3.600zM6.500 8l-1.800-2.500h3.600z" fill="#333"/></svg>
<svg style="left:12px;top:333px" width="9" height="9" viewBox="0 0 9 9"><rect x="3.500" y="3.500" width="5" height="5" fill="#d6d6d6" stroke="#333" stroke-width="1.200"/><rect x="0.500" y="0.500" width="5.500" height="5.500" fill="#fff" stroke="#333" stroke-width=".9"/><path d="M1 5.500L5.500 1" stroke="#f00" stroke-width="1"/></svg>
<div class="sel" style="left:12px;top:349px;width:15px;height:13px;background:#a2a2a2;border-color:#8a8a8a"></div>
<svg style="left:16px;top:352px" width="8" height="8" viewBox="0 0 8 8"><rect x="0.700" y="0.700" width="6.500" height="6.500" fill="#d0d0d0" stroke="#444" stroke-width="1.200"/></svg>
<div class="a gt" style="left:34px;top:348.800px;width:11px;font-family:'Liberation Serif',serif;font-weight:bold;font-size:11.500px;line-height:14px;color:#333;text-align:center">T</div>
<div class="a" style="left:8px;top:371px;width:10px;height:10px;background:#000"></div>
<div class="a" style="left:25px;top:371px;width:10px;height:10px;background:linear-gradient(90deg,#fff,#222);border:1px solid #444"></div>
<div class="sel" style="left:39px;top:368px;width:16px;height:16px;background:#8f8f8f;border-color:#7a7a7a"></div>
<svg style="left:42px;top:371px" width="10" height="10" viewBox="0 0 10 10"><rect x="0.500" y="0.500" width="9" height="9" fill="#fff" stroke="#444" stroke-width="1"/><path d="M1 9L9 1" stroke="#f00" stroke-width="1.700"/></svg>
<svg style="left:13px;top:393px" width="11" height="11" viewBox="0 0 11 11"><rect x="0.500" y="0.500" width="10" height="10" fill="#a8a8a8" stroke="#666" stroke-width="1"/><path d="M0.500 2.500h10" stroke="#666"/><path d="M3 5l4.500 1.500-1 1.500L3 7z" fill="#eee"/></svg>
<div class="sel" style="left:31px;top:389px;width:24px;height:18px"></div>
<svg style="left:38px;top:393px" width="10" height="11" viewBox="0 0 10 11"><rect x="0.500" y="0.500" width="9" height="10" fill="#bdbdbd" stroke="#555" stroke-width="1"/><path d="M0.500 2.500h9" stroke="#555"/></svg>
<div class="a" style="left:51px;top:403px;width:0;height:0;border-left:3px solid transparent;border-bottom:3px solid #222"></div>
</body></html>
